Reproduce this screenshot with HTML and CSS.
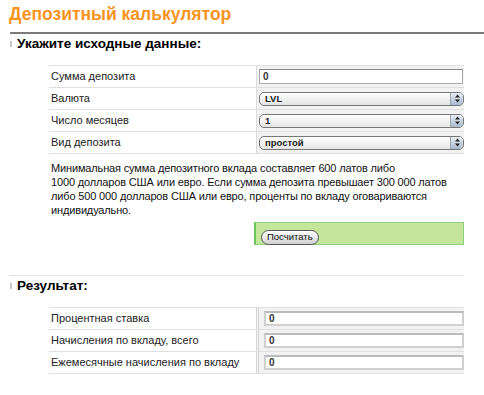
FILE: index.html
```html
<!DOCTYPE html>
<html lang="ru">
  <head>
    <meta charset="UTF-8" />
    <title>Депозитный калькулятор</title>
    <link rel="stylesheet" href="styles.css">
  </head>
  <body>
    <h1 class="title">Депозитный калькулятор</h1>
    <div class="rule"></div>

    <h2 class="section"><span class="marker"></span>Укажите исходные данные:</h2>
    <div class="form-table">
      <div class="row">
        <div class="label">Сумма депозита</div>
        <div class="field"><input class="text-input" type="text" value="0" /></div>
      </div>
      <div class="row">
        <div class="label">Валюта</div>
        <div class="field">
          <div class="select">LVL<span class="arrows"><svg width="7" height="9" viewBox="0 0 7 9"><path d="M3.5 0.5 L6 3.5 H1 Z M3.5 8.5 L6 5.5 H1 Z" fill="#222"/></svg></span></div>
        </div>
      </div>
      <div class="row">
        <div class="label">Число месяцев</div>
        <div class="field">
          <div class="select">1<span class="arrows"><svg width="7" height="9" viewBox="0 0 7 9"><path d="M3.5 0.5 L6 3.5 H1 Z M3.5 8.5 L6 5.5 H1 Z" fill="#222"/></svg></span></div>
        </div>
      </div>
      <div class="row">
        <div class="label">Вид депозита</div>
        <div class="field">
          <div class="select">простой<span class="arrows"><svg width="7" height="9" viewBox="0 0 7 9"><path d="M3.5 0.5 L6 3.5 H1 Z M3.5 8.5 L6 5.5 H1 Z" fill="#222"/></svg></span></div>
        </div>
      </div>
    </div>

    <p class="note">
      Минимальная сумма депозитного вклада составляет 600 латов либо<br />
      1000 долларов США или евро. Если сумма депозита превышает 300 000 латов<br />
      либо 500 000 долларов США или евро, проценты по вкладу оговариваются<br />
      индивидуально.
    </p>

    <div class="action">
      <button class="calc" type="button">Посчитать</button>
    </div>

    <div class="rule light"></div>
    <h2 class="section"><span class="marker"></span>Результат:</h2>
    <div class="form-table result">
      <div class="row">
        <div class="label">Процентная ставка</div>
        <div class="field"><input class="text-input" type="text" value="0" /></div>
      </div>
      <div class="row">
        <div class="label">Начисления по вкладу, всего</div>
        <div class="field"><input class="text-input" type="text" value="0" /></div>
      </div>
      <div class="row">
        <div class="label">Ежемесячные начисления по вкладу</div>
        <div class="field"><input class="text-input" type="text" value="0" /></div>
      </div>
    </div>
  </body>
</html>
```

FILE: styles.css
```css
body {
  font-family: "Liberation Sans", Arial, sans-serif;
  margin: 0;
  background-color: #fff;
  color: #111;
}
.title {
  margin: 0 0 7px;
  padding: 3px 0 0 9px;
  font-size: 17.5px;
  line-height: 22px;
  color: #f7941d;
}
.rule {
  margin-left: 10px;
  border-top: 2px solid #7a7a7a;
}
.rule.light {
  margin: 30px 20px 0 10px;
  border-top: 1px solid #e2e2e2;
}
.section {
  display: flex;
  align-items: center;
  margin: 2px 0 0 10px;
  font-size: 13.5px;
  line-height: 16px;
  color: #000;
}
.marker {
  width: 2px;
  height: 6px;
  margin-right: 5px;
  background-color: #c8c8c8;
}
.form-table {
  margin: 13px 0 0 49px;
  width: 415px;
  border-top: 1px solid #e0e0e0;
}
.row {
  display: grid;
  grid-template-columns: 207px 208px;
  height: 21px;
  border-bottom: 1px solid #e0e0e0;
}
.label {
  padding-left: 2px;
  font-size: 11px;
  line-height: 21px;
  white-space: nowrap;
  color: #222;
}
.field {
  display: flex;
  align-items: center;
  padding-left: 2px;
  border-left: 1px solid #dcdcdc;
  background-color: #f2f2f2;
}
.text-input {
  box-sizing: border-box;
  width: 204px;
  height: 15px;
  margin: 0;
  padding: 0 3px;
  border: 1px solid #a8a8a8;
  border-top-color: #888;
  background-color: #fff;
  font-family: inherit;
  font-size: 10px;
  font-weight: bold;
  color: #333;
}
.select {
  position: relative;
  box-sizing: border-box;
  width: 206px;
  height: 14px;
  padding-left: 5px;
  border: 1px solid #777;
  border-radius: 5px;
  background: linear-gradient(#fff, #e4e4e4);
  font-size: 9.5px;
  font-weight: bold;
  line-height: 12px;
  color: #222;
}
.arrows {
  position: absolute;
  top: 0;
  right: 0;
  width: 12px;
  height: 12px;
  display: flex;
  align-items: center;
  justify-content: center;
  border-left: 1px solid #9aa6b4;
  border-radius: 0 4px 4px 0;
  background: linear-gradient(#e8eef6, #a9b8cc);
}
.note {
  margin: 7px 0 0 51px;
  font-size: 11px;
  line-height: 14px;
  letter-spacing: -0.15px;
  white-space: nowrap;
  color: #111;
}
.action {
  box-sizing: border-box;
  margin: 5px 0 0 254px;
  width: 210px;
  height: 23px;
  padding: 3px 0 0 5px;
  border: 1px solid #8cd07a;
  border-left: 2px solid #66c85a;
  background-color: #c6e59c;
}
.calc {
  height: 15px;
  padding: 0 5px;
  border: 1px solid #555;
  border-radius: 8px;
  background: linear-gradient(#fff, #d0d0d0);
  font-family: inherit;
  font-size: 9.5px;
  line-height: 12px;
  color: #111;
}
.result .field {
  padding-left: 5px;
  border-left: 3px double #d4d4d4;
}
.result .text-input {
  width: 200px;
  border: 2px solid #d0d0d0;
  border-top-color: #bbb;
}
```
